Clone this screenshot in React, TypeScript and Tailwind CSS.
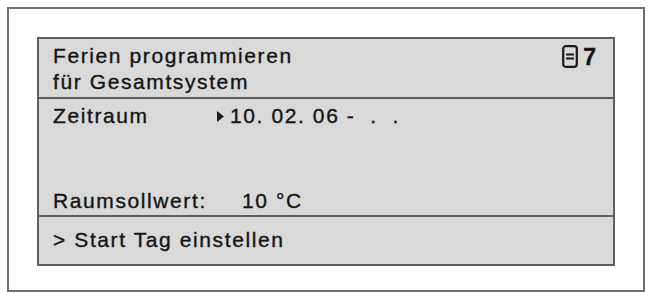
export default function App() {
  return (
    <div className="w-[654px] h-[295px] bg-white pl-[7px] pt-[7px]" style={{ fontFamily: '"Liberation Sans", Arial, sans-serif' }}>
      <div className="w-[638px] h-[285px] border-2 border-[#6f6f6f] pt-[28px] pl-[28px]">
        <div className="w-[578px] h-[229px] border-2 border-[#5e5e5e] bg-[#d9d9d9] flex flex-col text-[21px] leading-[26px] tracking-[1.6px] text-[#141414] [-webkit-text-stroke:0.35px_#141414]">
          {/* header */}
          <div className="h-[60px] border-b-2 border-[#5e5e5e] flex justify-between pl-[14px] pr-[17px] pt-[4px]">
            <div>
              <div>Ferien programmieren</div>
              <div>für Gesamtsystem</div>
            </div>
            <div className="flex items-start gap-[5px]">
              <svg width="16" height="23" viewBox="0 0 16 23" className="mt-[2px]">
                <rect x="1.2" y="1.2" width="13.6" height="20.6" rx="2.5" fill="none" stroke="#1a1a1a" strokeWidth="2.2" />
                <rect x="4" y="8.5" width="8" height="2" fill="#1a1a1a" />
                <rect x="4" y="12.5" width="8" height="2" fill="#1a1a1a" />
              </svg>
              <span className="font-bold tracking-normal text-[23px] leading-[28px]">7</span>
            </div>
          </div>

          {/* values */}
          <div className="h-[118px] border-b-2 border-[#5e5e5e] flex flex-col justify-between pl-[14px] pt-[4px] pb-[1px]">
            <div className="flex items-center">
              <span className="w-[164px]">Zeitraum</span>
              <svg width="7" height="11" viewBox="0 0 7 11" className="mr-[6px]">
                <path d="M0 0 L7 5.5 L0 11 Z" fill="#1a1a1a" />
              </svg>
              <span>10. 02. 06 -&nbsp;&nbsp;.&nbsp;&nbsp;.</span>
            </div>
            <div className="flex">
              <span className="w-[189px]">Raumsollwert:</span>
              <span>10 °C</span>
            </div>
          </div>

          {/* action */}
          <div className="flex-1 pl-[14px] pt-[10px]">
            <span>&gt; Start Tag einstellen</span>
          </div>
        </div>
      </div>
    </div>
  );
}
